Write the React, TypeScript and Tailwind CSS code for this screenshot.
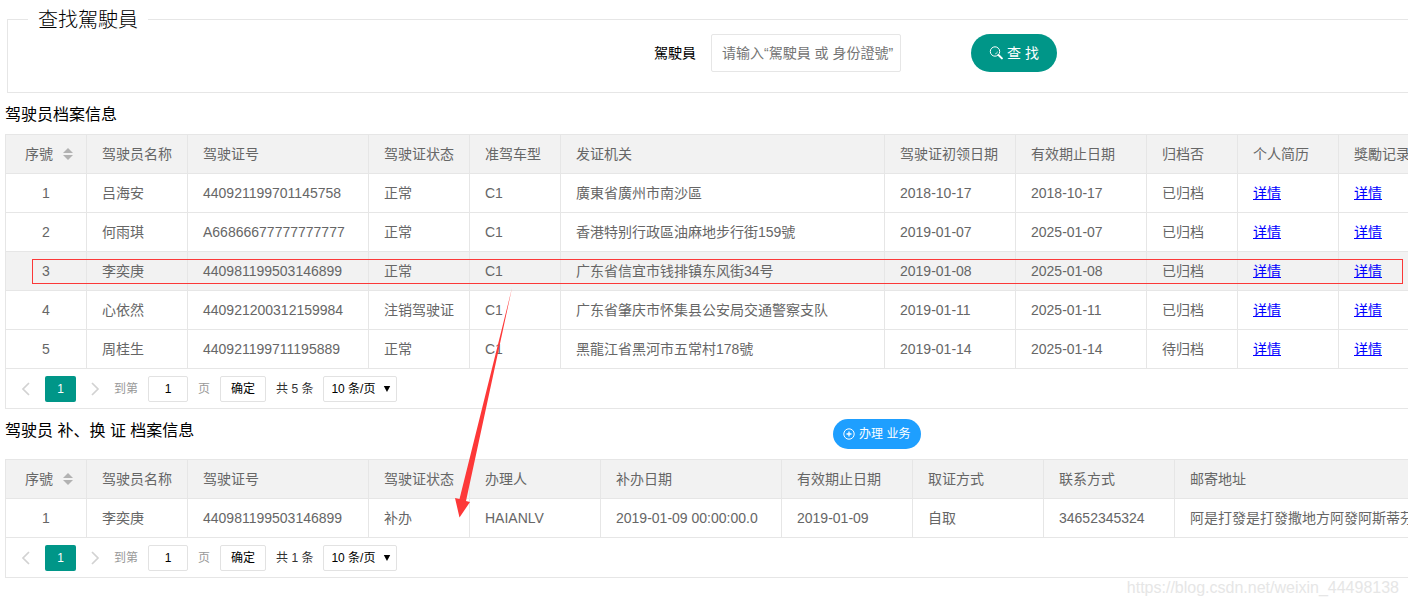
import type { ReactNode } from "react";

type Column = {
  title: string;
  width: string;
  sortable?: boolean;
};

const driverColumns: Column[] = [
  { title: "序號", width: "w-[81px]", sortable: true },
  { title: "驾驶员名称", width: "w-[101px]" },
  { title: "驾驶证号", width: "w-[181px]" },
  { title: "驾驶证状态", width: "w-[101px]" },
  { title: "准驾车型", width: "w-[91px]" },
  { title: "发证机关", width: "w-[324px]" },
  { title: "驾驶证初领日期", width: "w-[131px]" },
  { title: "有效期止日期", width: "w-[131px]" },
  { title: "归档否", width: "w-[91px]" },
  { title: "个人简历", width: "w-[101px]" },
  { title: "獎勵记录", width: "w-[101px]" },
];

const drivers = [
  ["吕海安", "440921199701145758", "正常", "C1", "廣東省廣州市南沙區", "2018-10-17", "2018-10-17", "已归档"],
  ["何雨琪", "A66866677777777777", "正常", "C1", "香港特别行政區油麻地步行街159號", "2019-01-07", "2025-01-07", "已归档"],
  ["李奕庚", "440981199503146899", "正常", "C1", "广东省信宜市钱排镇东风街34号", "2019-01-08", "2025-01-08", "已归档"],
  ["心依然", "440921200312159984", "注销驾驶证", "C1", "广东省肇庆市怀集县公安局交通警察支队", "2019-01-11", "2025-01-11", "已归档"],
  ["周桂生", "440921199711195889", "正常", "C1", "黑龍江省黑河市五常村178號", "2019-01-14", "2025-01-14", "待归档"],
];

const renewalColumns: Column[] = [
  { title: "序號", width: "w-[81px]", sortable: true },
  { title: "驾驶员名称", width: "w-[101px]" },
  { title: "驾驶证号", width: "w-[181px]" },
  { title: "驾驶证状态", width: "w-[101px]" },
  { title: "办理人", width: "w-[131px]" },
  { title: "补办日期", width: "w-[181px]" },
  { title: "有效期止日期", width: "w-[131px]" },
  { title: "取证方式", width: "w-[131px]" },
  { title: "联系方式", width: "w-[131px]" },
  { title: "邮寄地址", width: "w-[261px]" },
];

const renewals = [
  [
    "李奕庚",
    "440981199503146899",
    "补办",
    "HAIANLV",
    "2019-01-09 00:00:00.0",
    "2019-01-09",
    "自取",
    "34652345324",
    "阿是打發是打發撒地方阿發阿斯蒂芬",
  ],
];

function DetailLink() {
  return (
    <a href="#detail" className="text-[#0000ff] underline">
      详情
    </a>
  );
}

function SortIcon() {
  return (
    <svg width="10" height="12" viewBox="0 0 10 12" fill="#b2b2b2" aria-hidden="true">
      <path d="M5 0 10 5H0z" />
      <path d="M0 7h10l-5 5z" />
    </svg>
  );
}

type DataTableProps = {
  columns: Column[];
  rows: ReactNode[][];
  selected?: number;
  id: string;
};

function DataTable({ columns, rows, selected, id }: DataTableProps) {
  return (
    <div className="overflow-hidden border-t border-l border-[#e6e6e6]">
      <table className="w-px table-fixed border-separate border-spacing-0 text-left text-sm whitespace-nowrap text-[#666]">
        <thead className="bg-[#f2f2f2]">
          <tr>
            {columns.map((col) => (
              <th
                key={col.title}
                className={`${col.width} h-[39px] border-r border-b border-[#e6e6e6] p-0 font-normal ${
                  col.sortable ? "pl-[19px]" : "pl-[15px]"
                }`}
              >
                {col.sortable ? (
                  <button type="button" className="flex items-center gap-[10px]">
                    {col.title}
                    <SortIcon />
                  </button>
                ) : (
                  col.title
                )}
              </th>
            ))}
          </tr>
        </thead>
        <tbody>
          {rows.map((row, i) => (
            <tr key={i} className={selected === i ? "bg-[#f2f2f2]" : "bg-white"}>
              <td className="h-[39px] border-r border-b border-[#e6e6e6] p-0 text-center">{i + 1}</td>
              {row.map((cell, j) => (
                <td key={j} className="h-[39px] overflow-hidden border-r border-b border-[#e6e6e6] p-0 pl-[15px]">
                  {cell}
                </td>
              ))}
            </tr>
          ))}
        </tbody>
      </table>
      <Pagination total={rows.length} id={id} />
    </div>
  );
}

function Chevron({ path }: { path: string }) {
  return (
    <svg width="10" height="14" viewBox="0 0 10 14" fill="none" stroke="#d2d2d2" strokeWidth="1.7" aria-hidden="true">
      <path d={path} />
    </svg>
  );
}

function Pagination({ total, id }: { total: number; id: string }) {
  return (
    <nav className="flex h-10 items-center gap-[10px] border-b border-[#e6e6e6] text-xs text-[#999]">
      <div className="flex items-center">
        <button type="button" aria-label="上一页" className="flex h-[26px] w-[39px] items-center justify-center">
          <Chevron path="M8 1 2 7l6 6" />
        </button>
        <span className="h-[26px] w-[31px] rounded-[2px] bg-[#009688] text-center leading-[26px] text-white">1</span>
        <button type="button" aria-label="下一页" className="flex h-[26px] w-[38px] items-center justify-center">
          <Chevron path="M2 1l6 6-6 6" />
        </button>
        <label htmlFor={`${id}-page`}>到第</label>
      </div>
      <input
        id={`${id}-page`}
        type="text"
        defaultValue="1"
        className="h-[26px] w-10 rounded-[2px] border border-[#e2e2e2] text-center text-black"
      />
      <span>页</span>
      <button type="button" className="h-[26px] w-[46px] rounded-[2px] border border-[#e2e2e2] text-black">
        确定
      </button>
      <span className="text-[#333]">共 {total} 条</span>
      <div className="relative text-black">
        <select
          aria-label="每页条数"
          className="h-[26px] w-[74px] appearance-none rounded-[2px] border border-[#e2e2e2] bg-white pl-[7px]"
        >
          <option>10 条/页</option>
          <option>20 条/页</option>
        </select>
        <svg
          className="pointer-events-none absolute top-[10px] right-[6px]"
          width="8"
          height="6"
          viewBox="0 0 8 6"
          aria-hidden="true"
        >
          <path d="M0.800 0h6.400L4 6z" />
        </svg>
      </div>
    </nav>
  );
}

export default function App() {
  return (
    <main className="relative overflow-hidden bg-white pb-7 font-['Liberation_Sans','Noto_Sans_CJK_SC',sans-serif] text-black">
      <fieldset className="mt-1 ml-[7px] border border-r-0 border-[#e6e6e6] pb-5">
        <legend className="ml-5 px-[10px] pt-[2px] text-xl leading-7 font-light">查找駕駛員</legend>
        <div className="flex items-center pl-[44%] text-sm">
          <label htmlFor="driver" className="w-[72px] shrink-0 text-right">
            駕駛員
          </label>
          <input
            id="driver"
            type="text"
            placeholder="请输入“駕駛員 或 身份證號”"
            className="ml-[15px] h-[38px] w-[190px] rounded-[2px] border border-[#e6e6e6] pl-[10px] placeholder:text-[#757575]"
          />
          <button
            type="button"
            className="ml-[70px] flex h-[38px] w-[86px] items-center justify-center gap-1 rounded-full bg-[#009688] text-white"
          >
            <svg width="14" height="14" viewBox="0 0 14 14" fill="none" stroke="currentColor" aria-hidden="true">
              <circle cx="6" cy="5.5" r="4.7" />
              <path d="M8.400 5.500a2.400 2.400 0 0 1-2.400 2.400" strokeWidth="0.6" />
              <path d="M9.500 9l3.400 3.400" strokeWidth="2" strokeLinecap="round" />
            </svg>
            查 找
          </button>
        </div>
      </fieldset>

      <div className="ml-[5px]">
        <h2 className="pt-[10px] pb-[7px] text-base leading-6">驾驶员档案信息</h2>
        <DataTable
          id="drivers"
          columns={driverColumns}
          rows={drivers.map((row) => [...row, <DetailLink />, <DetailLink />])}
          selected={2}
        />

        <div className="flex items-start py-[10px]">
          <h2 className="w-[59%] text-base leading-6">驾驶员 补、换 证 档案信息</h2>
          <button
            type="button"
            className="flex h-[30px] w-[88px] items-center justify-center gap-1 rounded-full bg-[#1e9fff] text-xs text-white"
          >
            <svg width="12" height="12" viewBox="0 0 12 12" fill="none" stroke="currentColor" aria-hidden="true">
              <circle cx="6" cy="6" r="5.2" />
              <path d="M6 3.5v5M3.5 6h5" strokeWidth="1.3" />
            </svg>
            办理 业务
          </button>
        </div>
        <DataTable id="renewals" columns={renewalColumns} rows={renewals} />
      </div>

      {/* Marks on top of the tables */}
      <div className="pointer-events-none absolute top-[259px] right-[5px] left-8 h-[25px] border border-[#fb3838]" />
      <svg
        className="pointer-events-none absolute top-[288px] left-[454px]"
        width="60"
        height="230"
        viewBox="0 0 60 230"
        fill="#fd3838"
        aria-hidden="true"
      >
        <path d="M58 0 12 213l4 1L5.500 229.500 1 210l4.500 1z" />
      </svg>
      <p className="pointer-events-none absolute right-[9px] bottom-[6px] text-base leading-6 text-[#e6e6e6]">
        https://blog.csdn.net/weixin_44498138
      </p>
    </main>
  );
}
